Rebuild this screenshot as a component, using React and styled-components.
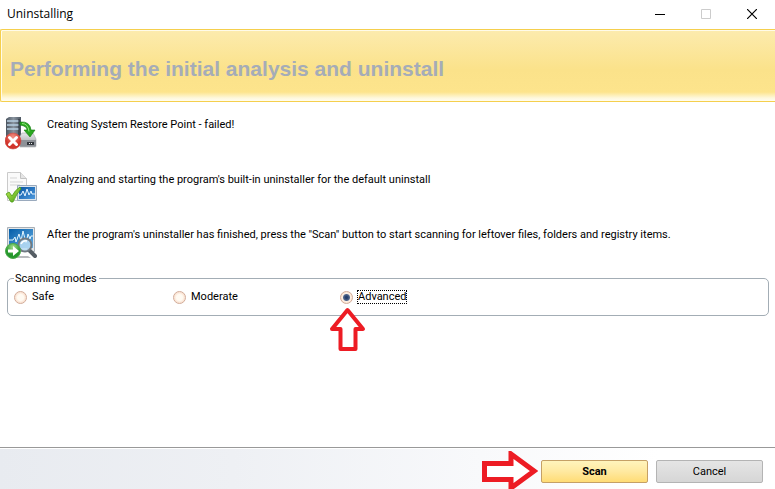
import React from 'react';
import styled, { createGlobalStyle } from 'styled-components';

const GlobalStyle = createGlobalStyle`
  * { box-sizing: border-box; }
  body {
    margin: 0;
    background: #fff;
    color: #000;
    font: 11px/14px Roboto, Tahoma, sans-serif;
  }
  button, input { font: inherit; color: inherit; }
`;

const Window = styled.div`
  display: flex;
  flex-direction: column;
  min-height: 100vh;
`;

const TitleBar = styled.header`
  display: flex;
  align-items: center;
  justify-content: space-between;
  height: 29px;
  padding: 0 0 2px 7px;
  font: 12px/16px "Open Sans", "Segoe UI", sans-serif;
`;

const WindowControls = styled.div`
  display: flex;
`;

const ControlButton = styled.button`
  display: grid;
  place-items: center;
  width: 46px;
  height: 27px;
  padding: 0;
  border: 0;
  background: none;
  color: ${(p) => (p.disabled ? '#ccc' : '#000')};
`;

const Banner = styled.div`
  display: flex;
  align-items: center;
  height: 73px;
  padding: 6px 9px 0;
  border: solid #f5cf4d;
  border-width: 1px 0 1px 1px;
  border-radius: 2px 0 0 2px;
  box-shadow: inset 1px 1px 0 #fffbe9;
  background: linear-gradient(#fcebae 0, #fbe28a 40px, #fde48c 62px, #fef8dc 68px, #fffdf0 71px);
`;

const Heading = styled.h1`
  margin: 0;
  color: #a5acb8;
  font: bold 21px/24px "Liberation Sans", Arial, sans-serif;
`;

const Main = styled.main`
  flex: 1;
  padding: 14px 6px 0 5px;
`;

const Steps = styled.ul`
  margin: 0;
  padding: 0;
  list-style: none;
`;

const Step = styled.li`
  display: flex;
  gap: 10px;
  height: 55px;
  line-height: 18px;

  svg { flex: none; }
`;

const Modes = styled.fieldset`
  display: flex;
  height: 45px;
  margin: -10px 0 0 2px;
  padding: 3px 6px 0;
  border: 1px solid #a3adb5;
  border-radius: 5px;
`;

const Legend = styled.legend`
  padding: 1px 2px 0 1px;
`;

const Mode = styled.label`
  position: relative;
  display: flex;
  align-items: center;
  gap: 4px;
  width: ${(p) => p.$width}px;
  height: 16px;
`;

const Radio = styled.input`
  appearance: none;
  width: 13px;
  height: 13px;
  margin: 0;
  border: 1px solid #d2ab98;
  border-radius: 50%;
  outline: 0;
  background: radial-gradient(circle, #fffaf2 0 3px, #fbe5d5 5px, #fff6ee 6px);

  &:checked {
    background: radial-gradient(circle, #263f6c 0 1px, #53688c 3px, #fdf0e4 4px, #fbe2cf 6px);
  }
`;

const ModeName = styled.span`
  padding: 0 1px;
  outline: ${(p) => (p.$focused ? '1px dotted #000' : '0')};
  outline-offset: -1px;
`;

const PointerUp = styled.svg`
  position: absolute;
  top: 18px;
  left: -11px;
`;

const Footer = styled.footer`
  display: flex;
  justify-content: flex-end;
  gap: 8px;
  height: 42px;
  padding: 12px 12px 0;
  border-top: 1px solid #999;
  box-shadow: inset 0 1px 0 #fff;
  background: linear-gradient(90deg, #e8ebf0, #eef0f4 30%, #f8f9fb 62%, #fff 85%);
`;

const ActionButton = styled.button`
  width: 107px;
  height: 23px;
  padding: 1px 0 0;
  border: 1px solid ${(p) => (p.$primary ? '#c5a066' : '#b4b4b4')};
  border-radius: 2px;
  background: ${(p) => (p.$primary ? 'linear-gradient(#fff4bd, #ffe9a0 50%, #ffdc75)' : 'linear-gradient(#e5e5e5, #d6d6d6)')};
  font-weight: ${(p) => (p.$primary ? 'bold' : 'normal')};
`;

const ScanAction = styled.div`
  position: relative;
`;

const PointerRight = styled.svg`
  position: absolute;
  top: -9px;
  left: -59px;
`;

const RestoreIcon = () => (
  <svg width="32" height="34" viewBox="0 0 32 34" aria-hidden="true">
    <defs>
      <linearGradient id="tower"><stop stopColor="#4b5560" /><stop offset=".5" stopColor="#8a949f" /><stop offset="1" stopColor="#4c5661" /></linearGradient>
      <linearGradient id="drive" x2="0" y2="1"><stop stopColor="#e7e8ea" /><stop offset="1" stopColor="#969a9f" /></linearGradient>
      <radialGradient id="failed" cy=".25"><stop stopColor="#f39184" /><stop offset="1" stopColor="#d2342b" /></radialGradient>
    </defs>
    <path d="M1 3l3-2h12v23H1z" fill="url(#tower)" />
    <path d="M2 5h12M2 9h12M2 13h12" stroke="#b8d0e2" strokeWidth="1.5" />
    <path d="M14 3v20" stroke="#272f38" />
    <path d="M14 22l3-5h11l3 6v7q0 1-1 1H15z" fill="url(#drive)" stroke="#a6a8ab" strokeWidth=".6" />
    <path d="M14 24h17v6H14z" fill="#8d9197" />
    <path d="M22 26h7v3h-7z" fill="#34383e" />
    <path d="M24 27.500h4" stroke="#f4f4f4" strokeDasharray="1 1" />
    <path d="M15 6q10-1 11 8h4l-5 7-6-7h3q0-4-7-5z" fill="#29a81f" stroke="#13790d" strokeWidth=".6" />
    <path d="M17 7.500q6 0 7 8" fill="none" stroke="#92e77b" />
    <circle cx="8" cy="25" r="8" fill="url(#failed)" stroke="#ca5149" strokeWidth=".6" />
    <path d="M4.500 21.500l7 7m0-7l-7 7" stroke="#fff" strokeWidth="3" strokeLinecap="round" />
  </svg>
);

const AnalyzeIcon = () => (
  <svg width="32" height="34" viewBox="0 0 32 34" aria-hidden="true">
    <defs>
      <linearGradient id="screen" x2="1" y2="1"><stop stopColor="#0754a4" /><stop offset="1" stopColor="#4f9add" /></linearGradient>
      <linearGradient id="tick" x2="1" y2="1"><stop stopColor="#c8ef57" /><stop offset="1" stopColor="#3e9d11" /></linearGradient>
    </defs>
    <path d="M2.500 1.500h13l6 6v22h-19z" fill="#fafafa" stroke="#cacaca" />
    <path d="M15.500 1.500v6h6" fill="#e5e5e5" stroke="#c2c2c2" />
    <path d="M5 7h7M5 11h13M5 14h10" stroke="#d5d5d5" />
    <path d="M12.500 14.500h19v15h-19z" fill="#dce5ed" stroke="#9aaabd" />
    <path d="M14 16h16v12H14z" fill="url(#screen)" />
    <path d="M14 24h2l2-4 2 5 2-7 2 6 2-4 1 3h3" fill="none" stroke="#e6f4ff" />
    <path d="M1 23l3-2 3 4q3-6 8-9l1 2q-4 4-8 13H6z" fill="url(#tick)" stroke="#4b9c19" strokeWidth=".8" />
  </svg>
);

const ScanIcon = () => (
  <svg width="32" height="34" viewBox="0 0 32 34" aria-hidden="true">
    <defs>
      <linearGradient id="monitor" x2="1" y2="1"><stop stopColor="#035da8" /><stop offset="1" stopColor="#64ade4" /></linearGradient>
      <radialGradient id="go" cy=".25"><stop stopColor="#a8df8e" /><stop offset="1" stopColor="#25972c" /></radialGradient>
    </defs>
    <path d="M2.500 1.500h27v24h-27z" fill="#e3e6e8" stroke="#a8afb6" />
    <path d="M4 3h24v19H4z" fill="url(#monitor)" />
    <path d="M4 14h4l2-3 1 5 3-8 2 7 2-10 3 12 2-9 2 5 1-3h2" fill="none" stroke="#e5f7ff" />
    <path d="M10 30h13l3 2H8z" fill="#b8babd" />
    <path d="M24 24l6 6" stroke="#555d64" strokeWidth="4" strokeLinecap="round" />
    <circle cx="20" cy="19" r="6.500" fill="#b9dcf3" fillOpacity=".85" stroke="#717a81" strokeWidth="2" />
    <path d="M16 18q2-4 6-3" fill="none" stroke="#fff" strokeWidth="1.500" />
    <circle cx="8" cy="25" r="7.500" fill="url(#go)" stroke="#4dac4b" />
    <path d="M3 23.500h5V20l6 5-6 5v-3.500H3z" fill="#fff" />
  </svg>
);

const steps = [
  { Icon: RestoreIcon, text: 'Creating System Restore Point - failed!' },
  { Icon: AnalyzeIcon, text: "Analyzing and starting the program's built-in uninstaller for the default uninstall" },
  { Icon: ScanIcon, text: 'After the program\'s uninstaller has finished, press the "Scan" button to start scanning for leftover files, folders and registry items.' },
];

export default function App() {
  const [mode, setMode] = React.useState('Advanced');
  const modes = [['Safe', 159], ['Moderate', 167], ['Advanced', 80]];
  return (
    <>
      <GlobalStyle />
      <Window>
        <TitleBar>
          <span>Uninstalling</span>
          <WindowControls>
            <ControlButton aria-label="Minimize">
              <svg width="10" height="10"><path d="M0 5.500h10" stroke="currentColor" /></svg>
            </ControlButton>
            <ControlButton aria-label="Maximize" disabled>
              <svg width="10" height="10"><path d="M.5.500h9v9h-9z" fill="none" stroke="currentColor" /></svg>
            </ControlButton>
            <ControlButton aria-label="Close">
              <svg width="10" height="10"><path d="M0 0l10 10M10 0L0 10" stroke="currentColor" strokeWidth="1.200" /></svg>
            </ControlButton>
          </WindowControls>
        </TitleBar>
        <Banner><Heading>Performing the initial analysis and uninstall</Heading></Banner>
        <Main>
          <Steps>
            {steps.map(({ Icon, text }) => (
              <Step key={text}><Icon /><span>{text}</span></Step>
            ))}
          </Steps>
          <Modes>
            <Legend>Scanning modes</Legend>
            {modes.map(([name, width]) => (
              <Mode key={name} $width={width}>
                <Radio type="radio" name="mode" checked={mode === name} onChange={() => setMode(name)} />
                <ModeName $focused={mode === name}>{name}</ModeName>
                {name === 'Advanced' && (
                  <PointerUp width="37" height="45" viewBox="0 0 37 45" aria-hidden="true">
                    <path d="M18.500 3L34 22h-7.500v20h-15V22H3z" fill="#fff" stroke="#ed1c24" strokeWidth="4" strokeLinejoin="round" />
                  </PointerUp>
                )}
              </Mode>
            ))}
          </Modes>
        </Main>
        <Footer>
          <ScanAction>
            <PointerRight width="56" height="38" viewBox="0 0 56 38" aria-hidden="true">
              <path d="M2.500 12.500H29V3l23 17-23 17v-8.500H2.500z" fill="#fff" stroke="#ed1c24" strokeWidth="5" />
            </PointerRight>
            <ActionButton $primary>Scan</ActionButton>
          </ScanAction>
          <ActionButton>Cancel</ActionButton>
        </Footer>
      </Window>
    </>
  );
}
